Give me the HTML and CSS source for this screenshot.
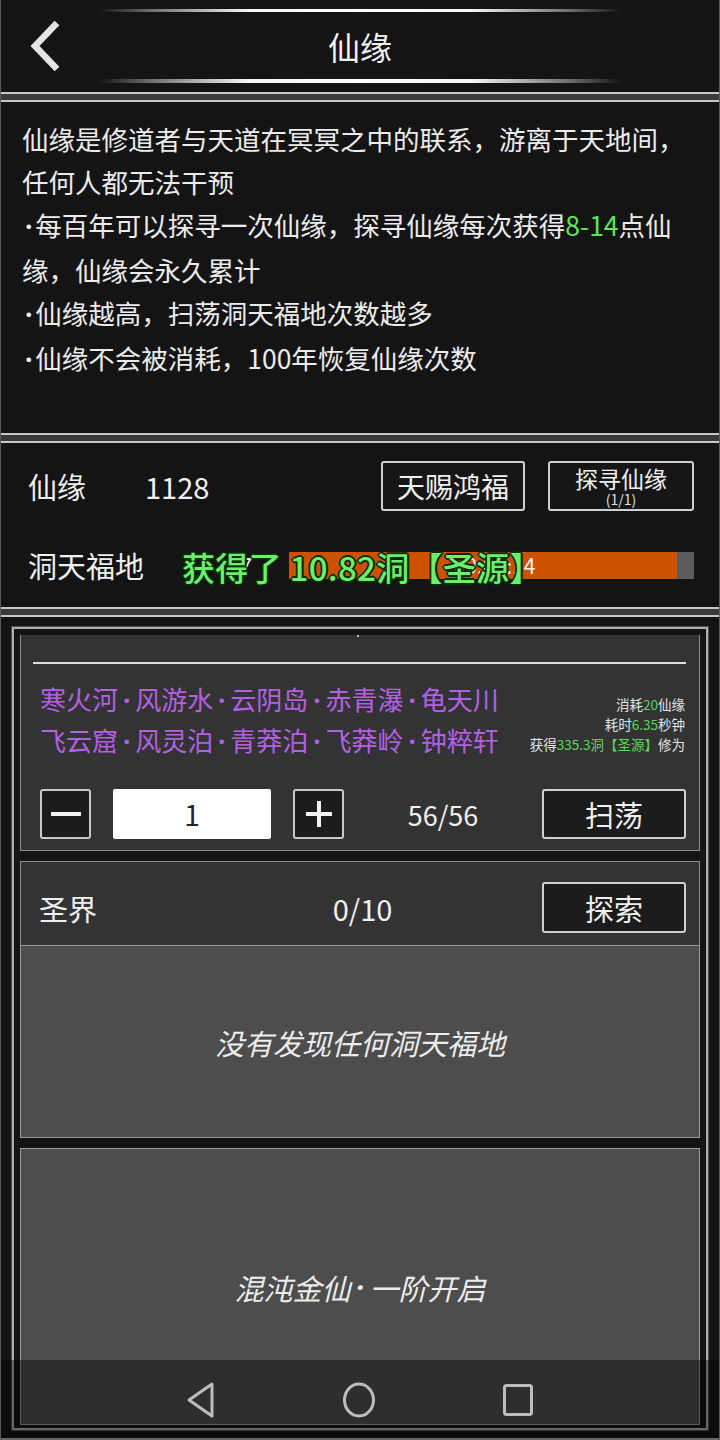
FILE: index.html
```html
<!DOCTYPE html>
<html lang="zh">
<head>
<meta charset="utf-8">
<title>仙缘</title>
<link rel="stylesheet" href="styles.css">
</head>
<body>
<div class="page">
  <header class="header">
    <div class="glow glow-top"></div>
    <div class="title-row">
      <div class="back">
        <svg width="40" height="52" viewBox="0 0 40 52"><polyline points="30,3 8,26 30,49" fill="none" stroke="#e4e4e4" stroke-width="6.5" stroke-linecap="butt" stroke-linejoin="miter"/></svg>
      </div>
      <div class="title">仙缘</div>
      <div></div>
    </div>
    <div class="glow glow-bottom"></div>
  </header>
  <div class="sep"></div>
  <section class="desc">
    <p>仙缘是修道者与天道在冥冥之中的联系，游离于天地间，任何人都无法干预</p>
    <p><span class="mid">·</span>每百年可以探寻一次仙缘，探寻仙缘每次获得<span class="green">8-14</span>点仙缘，仙缘会永久累计</p>
    <p><span class="mid">·</span>仙缘越高，扫荡洞天福地次数越多</p>
    <p><span class="mid">·</span>仙缘不会被消耗，100年恢复仙缘次数</p>
  </section>
  <div class="sep"></div>
  <section class="stats">
    <div class="stat-row">
      <span class="label">仙缘</span>
      <span class="value">1128</span>
      <button class="btn btn-gift">天赐鸿福</button>
      <button class="btn btn-seek"><span class="seek-main">探寻仙缘</span><span class="seek-sub">(1/1)</span></button>
    </div>
    <div class="stat-row row-bar">
      <span class="label label-wide">洞天福地</span>
      <span class="under">57</span>
      <div class="bar"><div class="bar-fill" style="width:95.8%"></div><span class="bar-text">00:00:14</span></div>
      <div class="toast">获得了 10.82洞【圣源】</div>
    </div>
  </section>
  <div class="sep"></div>
  <main class="main">
    <div class="frame">
      <div class="card card-sweep">
        <div class="dot"></div>
        <div class="divider"></div>
        <div class="names-row">
          <div class="names">
            <div>寒火河<span class="mid">·</span>风游水<span class="mid">·</span>云阴岛<span class="mid">·</span>赤青瀑<span class="mid">·</span>龟天川</div>
            <div>飞云窟<span class="mid">·</span>风灵泊<span class="mid">·</span>青莽泊<span class="mid">·</span>飞莽岭<span class="mid">·</span>钟粹轩</div>
          </div>
          <div class="info">
            <div>消耗<span class="g">20</span>仙缘</div>
            <div>耗时<span class="g">6.35</span>秒钟</div>
            <div>获得<span class="g">335.3洞【圣源】</span>修为</div>
          </div>
        </div>
        <div class="controls">
          <button class="sq-btn"><svg width="32" height="32" viewBox="0 0 32 32"><line x1="1" y1="16" x2="31" y2="16" stroke="#f2f2f2" stroke-width="4"/></svg></button>
          <div class="num-input">1</div>
          <button class="sq-btn"><svg width="32" height="32" viewBox="0 0 32 32"><line x1="3" y1="16" x2="29" y2="16" stroke="#f2f2f2" stroke-width="4"/><line x1="16" y1="3" x2="16" y2="29" stroke="#f2f2f2" stroke-width="4"/></svg></button>
          <div class="count">56/56</div>
          <button class="btn btn-big">扫荡</button>
        </div>
      </div>
      <div class="card card-realm">
        <span class="realm-name">圣界</span>
        <span class="realm-count">0/10</span>
        <button class="btn btn-big btn-explore">探索</button>
      </div>
      <div class="box box-empty">没有发现任何洞天福地</div>
      <div class="box box-locked">混沌金仙<span class="mid">·</span>一阶开启</div>
    </div>
  </main>
  <nav class="navbar">
    <svg width="30" height="38" viewBox="0 0 30 38"><path d="M26 3 L26 35 L3 19 Z" fill="none" stroke="#bdbdbd" stroke-width="3" stroke-linejoin="round"/></svg>
    <svg width="34" height="38" viewBox="0 0 34 38"><ellipse cx="17" cy="19" rx="14.5" ry="16" fill="none" stroke="#bdbdbd" stroke-width="3"/></svg>
    <svg width="32" height="34" viewBox="0 0 32 34"><rect x="2.5" y="2.5" width="27" height="29" rx="2" fill="none" stroke="#bdbdbd" stroke-width="3"/></svg>
  </nav>
</div>
</body>
</html>
```
FILE: styles.css
```css
* { box-sizing: border-box; }
html, body { margin: 0; padding: 0; }
body {
  width: 720px;
  height: 1440px;
  overflow: hidden;
  background: #141414;
  color: #ececec;
  font-family: "Noto Sans CJK SC", "Noto Sans", sans-serif;
}
p { margin: 0; }
button {
  font-family: inherit;
  color: inherit;
  padding: 0;
  cursor: pointer;
}
.mid {
  display: inline-block;
  width: 0.66em;
  text-align: center;
  font-family: "Noto Sans", "DejaVu Sans", sans-serif;
  font-weight: 700;
}
.page {
  position: relative;
  width: 720px;
  height: 1440px;
  border-left: 1px solid #5a5a5a;
  border-right: 1px solid #5a5a5a;
  display: flex;
  flex-direction: column;
}
.header {
  height: 92px;
  flex: none;
  padding-top: 9px;
  display: flex;
  flex-direction: column;
}
.glow {
  margin: 0 98px;
  background: linear-gradient(90deg, rgba(255,255,255,0) 0%, rgba(200,200,200,0.5) 10%, #f4f4f4 28%, #ffffff 50%, #f4f4f4 72%, rgba(200,200,200,0.5) 90%, rgba(255,255,255,0) 100%);
}
.glow-top { height: 3px; }
.glow-bottom { height: 4px; }
.title-row {
  height: 67px;
  display: grid;
  grid-template-columns: 100px 1fr 100px;
  align-items: center;
}
.back { padding-left: 26px; display: flex; align-items: center; }
.title {
  text-align: center;
  font-size: 32px;
  color: #f2f2f2;
  line-height: 40px;
}
.sep {
  flex: none;
  height: 10px;
  background: #3a3a3a;
  border-top: 2px solid #c6c6c6;
  border-bottom: 2px solid #c6c6c6;
}
.desc {
  flex: none;
  height: 331px;
  padding: 15px 0 0 21px;
  width: 689px;
  font-size: 26.5px;
  line-height: 43px;
  color: #ececec;
}
.desc .mid { width: 0.5em; }
.green { color: #5ee65e; }
.stats {
  flex: none;
  height: 164px;
  padding: 18px 25px 0 27px;
  display: flex;
  flex-direction: column;
  gap: 29px;
}
.stat-row {
  height: 50px;
  display: flex;
  align-items: center;
  position: relative;
}
.label {
  width: 117px;
  font-size: 29px;
  color: #f0f0f0;
}
.label-wide { width: 150px; }
.value {
  font-size: 29px;
  color: #f0f0f0;
  margin-right: auto;
}
.btn {
  background: #161616;
  border: 2px solid #cfcfcf;
  border-radius: 3px;
  color: #f0f0f0;
}
.btn-gift {
  width: 144px;
  height: 50px;
  font-size: 28px;
  line-height: 40px;
}
.btn-seek {
  width: 146px;
  height: 50px;
  margin-left: 23px;
  display: flex;
  flex-direction: column;
  align-items: center;
  justify-content: center;
  padding-top: 2px;
}
.seek-main { font-size: 23px; line-height: 25px; }
.seek-sub { font-size: 14px; line-height: 17px; color: #e0e0e0; }
.under {
  width: 111px;
  font-size: 24px;
  color: #f0f0f0;
  padding-left: 48px;
}
.bar {
  flex: 1;
  height: 27px;
  background: #5c5c5c;
  position: relative;
  display: flex;
  align-items: center;
  justify-content: center;
}
.bar-fill {
  position: absolute;
  left: 0;
  top: 0;
  bottom: 0;
  background: #cc5200;
}
.bar-text {
  position: relative;
  font-size: 21px;
  line-height: 27px;
  color: #f4f4f4;
  margin-left: 6px;
}
.toast {
  position: absolute;
  left: 154px;
  top: 7px;
  font-size: 33px;
  line-height: 40px;
  font-weight: 500;
  letter-spacing: 0.3px;
  color: #6cf06c;
  white-space: nowrap;
  text-shadow: 1px 1px 0 #0b2a0b, -1px -1px 0 #0b2a0b, 1px -1px 0 #0b2a0b, -1px 1px 0 #0b2a0b, 2px 0 0 #0b2a0b, -2px 0 0 #0b2a0b, 0 2px 0 #0b2a0b, 0 -2px 0 #0b2a0b;
}
.main {
  flex: none;
  height: 823px;
  padding: 10px 11px 0 11px;
  border-bottom: 2px solid #a8a8a8;
  overflow: hidden;
}
.frame {
  height: 803px;
  border: 2px solid #adadad;
  box-shadow: 0 0 0 1px #505050;
  padding: 6px 6px 3px 6px;
  display: flex;
  flex-direction: column;
  overflow: hidden;
}
.card {
  flex: none;
  background: #333333;
  border: 1px solid #8c8c8c;
}
.card-sweep {
  height: 216px;
  border-top: none;
  padding: 27px 13px 0 12px;
  position: relative;
}
.dot {
  position: absolute;
  left: 336px;
  top: 0;
  width: 2px;
  height: 2px;
  background: #bbb;
}
.divider {
  height: 2px;
  background: #dcdcdc;
}
.names-row {
  margin-top: 15px;
  display: flex;
  justify-content: space-between;
  align-items: flex-start;
}
.names {
  padding-left: 7px;
  font-size: 26px;
  line-height: 40px;
  color: #b460e4;
  white-space: nowrap;
}
.info {
  padding-top: 15px;
  padding-right: 1px;
  text-align: right;
  font-size: 13.5px;
  line-height: 20px;
  color: #e4e4e4;
  white-space: nowrap;
}
.g { color: #5cd65c; }
.controls {
  margin-top: 28px;
  height: 50px;
  display: flex;
  align-items: center;
  padding-left: 7px;
}
.sq-btn {
  width: 51px;
  height: 50px;
  background: #1c1c1c;
  border: 2px solid #c8c8c8;
  border-radius: 3px;
  display: flex;
  align-items: center;
  justify-content: center;
}
.num-input {
  width: 158px;
  height: 50px;
  margin: 0 22px;
  background: #ffffff;
  border-radius: 2px;
  color: #222;
  font-size: 28px;
  line-height: 50px;
  text-align: center;
}
.count {
  flex: 1;
  text-align: center;
  font-size: 27px;
  color: #f0f0f0;
}
.btn-big {
  width: 144px;
  height: 50px;
  font-size: 29px;
  line-height: 40px;
  background: #1c1c1c;
}
.card-realm {
  margin-top: 10px;
  height: 84px;
  border-bottom: none;
  padding: 8px 13px 0 18px;
  display: grid;
  grid-template-columns: 1fr auto 1fr;
  align-items: center;
}
.realm-name { font-size: 29px; color: #f0f0f0; }
.realm-count { font-size: 29px; color: #f0f0f0; }
.btn-explore { justify-self: end; height: 51px; }
.box {
  flex: none;
  background: #4d4d4d;
  border: 1px solid #9a9a9a;
  display: flex;
  align-items: center;
  justify-content: center;
  font-size: 29px;
  font-style: italic;
  color: #ececec;
}
.box-empty { height: 193px; }
.box-locked { margin-top: 10px; height: 277px; }
.navbar {
  position: absolute;
  left: 0;
  right: 0;
  bottom: 0;
  height: 80px;
  background: rgba(0,0,0,0.4);
  display: flex;
  align-items: center;
  justify-content: center;
  gap: 126px;
}
```
